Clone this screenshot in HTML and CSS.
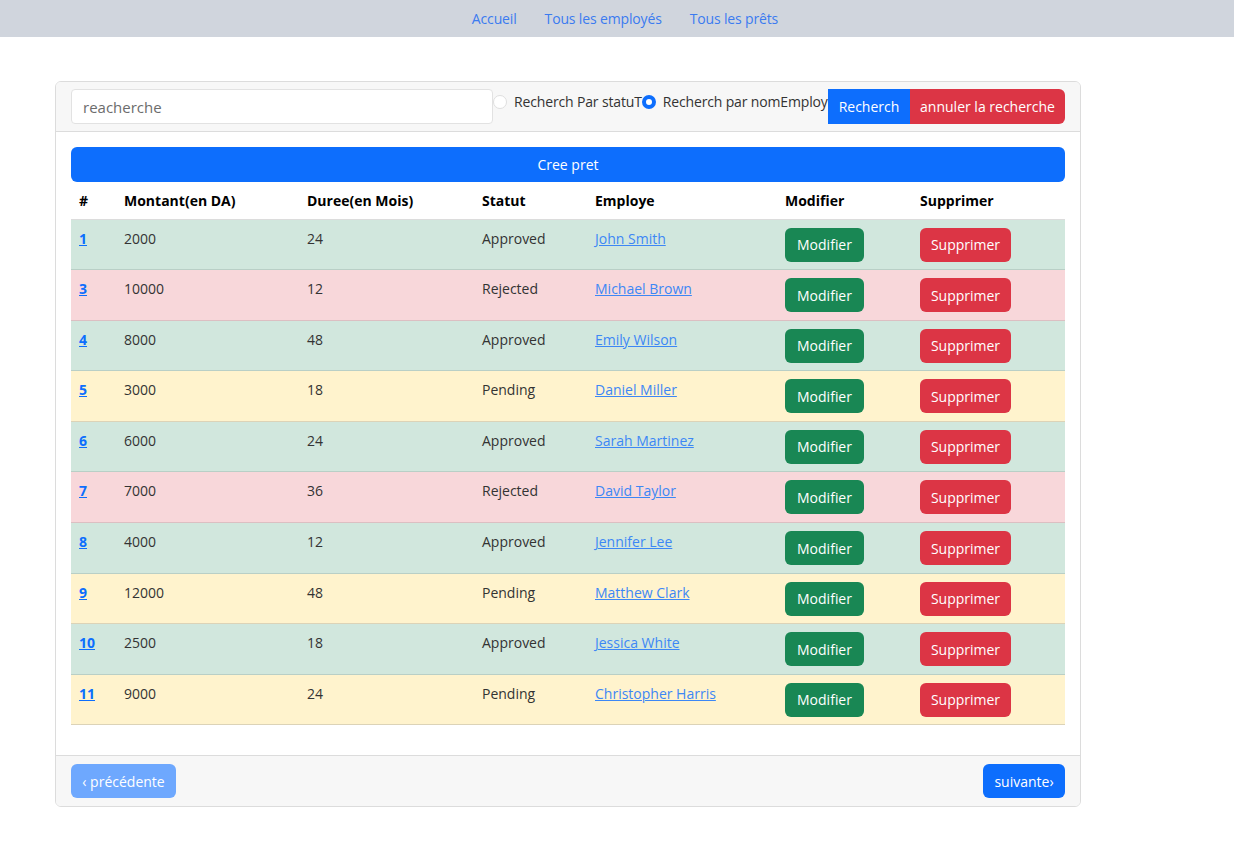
FILE: index.html
```html
<!DOCTYPE html>
<html lang="fr">
<head>
<meta charset="utf-8">
<title>Prêts</title>
<link rel="stylesheet" href="styles.css">
</head>
<body>
<nav class="topnav">
  <a href="#">Accueil</a>
  <a href="#">Tous les employés</a>
  <a href="#">Tous les prêts</a>
</nav>
<main class="page">
  <div class="card">
    <div class="card-header">
      <input class="search" type="text" placeholder="reacherche">
      <div class="radios">
        <label class="radio"><span class="dot"></span>Recherch Par statuT</label>
        <label class="radio"><span class="dot checked"></span>Recherch par nomEmploye</label>
      </div>
      <div class="btn-group">
        <button class="btn btn-blue sq-left">Recherch</button>
        <button class="btn btn-red sq-right">annuler la recherche</button>
      </div>
    </div>
    <div class="card-body">
      <button class="btn btn-blue btn-wide">Cree pret</button>
      <table class="loans">
        <colgroup>
          <col class="c1"><col class="c2"><col class="c3"><col class="c4"><col class="c5"><col class="c6"><col class="c7">
        </colgroup>
        <thead>
          <tr><th>#</th><th>Montant(en DA)</th><th>Duree(en Mois)</th><th>Statut</th><th>Employe</th><th>Modifier</th><th>Supprimer</th></tr>
        </thead>
        <tbody>
          <tr class="ok"><td><a class="id" href="#">1</a></td><td>2000</td><td>24</td><td>Approved</td><td><a class="emp" href="#">John Smith</a></td><td><button class="btn btn-green">Modifier</button></td><td><button class="btn btn-red">Supprimer</button></td></tr>
          <tr class="ko"><td><a class="id" href="#">3</a></td><td>10000</td><td>12</td><td>Rejected</td><td><a class="emp" href="#">Michael Brown</a></td><td><button class="btn btn-green">Modifier</button></td><td><button class="btn btn-red">Supprimer</button></td></tr>
          <tr class="ok"><td><a class="id" href="#">4</a></td><td>8000</td><td>48</td><td>Approved</td><td><a class="emp" href="#">Emily Wilson</a></td><td><button class="btn btn-green">Modifier</button></td><td><button class="btn btn-red">Supprimer</button></td></tr>
          <tr class="wait"><td><a class="id" href="#">5</a></td><td>3000</td><td>18</td><td>Pending</td><td><a class="emp" href="#">Daniel Miller</a></td><td><button class="btn btn-green">Modifier</button></td><td><button class="btn btn-red">Supprimer</button></td></tr>
          <tr class="ok"><td><a class="id" href="#">6</a></td><td>6000</td><td>24</td><td>Approved</td><td><a class="emp" href="#">Sarah Martinez</a></td><td><button class="btn btn-green">Modifier</button></td><td><button class="btn btn-red">Supprimer</button></td></tr>
          <tr class="ko"><td><a class="id" href="#">7</a></td><td>7000</td><td>36</td><td>Rejected</td><td><a class="emp" href="#">David Taylor</a></td><td><button class="btn btn-green">Modifier</button></td><td><button class="btn btn-red">Supprimer</button></td></tr>
          <tr class="ok"><td><a class="id" href="#">8</a></td><td>4000</td><td>12</td><td>Approved</td><td><a class="emp" href="#">Jennifer Lee</a></td><td><button class="btn btn-green">Modifier</button></td><td><button class="btn btn-red">Supprimer</button></td></tr>
          <tr class="wait"><td><a class="id" href="#">9</a></td><td>12000</td><td>48</td><td>Pending</td><td><a class="emp" href="#">Matthew Clark</a></td><td><button class="btn btn-green">Modifier</button></td><td><button class="btn btn-red">Supprimer</button></td></tr>
          <tr class="ok"><td><a class="id" href="#">10</a></td><td>2500</td><td>18</td><td>Approved</td><td><a class="emp" href="#">Jessica White</a></td><td><button class="btn btn-green">Modifier</button></td><td><button class="btn btn-red">Supprimer</button></td></tr>
          <tr class="wait"><td><a class="id" href="#">11</a></td><td>9000</td><td>24</td><td>Pending</td><td><a class="emp" href="#">Christopher Harris</a></td><td><button class="btn btn-green">Modifier</button></td><td><button class="btn btn-red">Supprimer</button></td></tr>
        </tbody>
      </table>
    </div>
    <div class="card-footer">
      <button class="btn btn-blue disabled">‹ précédente</button>
      <button class="btn btn-blue">suivante›</button>
    </div>
  </div>
</main>
</body>
</html>
```

FILE: styles.css
```css
* { box-sizing: border-box; }
body {
  margin: 0;
  font-family: "Open Sans", "Noto Sans", sans-serif;
  font-size: 15px;
  color: #212529;
  background: #fff;
}
.topnav {
  height: 37px;
  background: #d0d5dd;
  display: flex;
  justify-content: center;
  align-items: center;
  gap: 28px;
  padding-left: 16px;
}
.topnav a {
  color: #3b7bf0;
  text-decoration: none;
  font-size: 14px;
  letter-spacing: -0.15px;
}
.page {
  padding: 44px 0 0 55px;
}
.card {
  width: 1026px;
  border: 1px solid #dcdcdc;
  border-radius: 6px;
  overflow: hidden;
}
.card-header {
  background: #f7f7f7;
  border-bottom: 1px solid #dcdcdc;
  padding: 7px 15px 7px 15px;
  display: flex;
  align-items: center;
  height: 50px;
}
.search {
  width: 422px;
  height: 35px;
  border: 1px solid #e2e2e2;
  border-radius: 4px;
  padding: 0 11px;
  font-family: inherit;
  font-size: 15px;
  color: #212529;
  background: #fff;
  flex: none;
}
.search::placeholder { color: #6c6c6c; }
.radios {
  display: flex;
  align-items: center;
  width: 335px;
  overflow: hidden;
  white-space: nowrap;
  align-self: flex-start;
  padding-top: 3px;
  flex: none;
}
.radio {
  display: flex;
  align-items: center;
  font-size: 14px;
  letter-spacing: -0.15px;
  color: #333;
}
.dot {
  width: 14px;
  height: 14px;
  border-radius: 50%;
  border: 1px solid #dedede;
  background: #fff;
  margin-right: 7px;
  flex: none;
}
.dot.checked {
  border: 4px solid #0d6efd;
  margin-left: 0;
}
.btn-group { display: flex; flex: none; }
.btn {
  font-family: inherit;
  font-size: 14px;
  border: none;
  border-radius: 6px;
  padding: 0 12px;
  height: 35px;
  color: #fff;
  cursor: pointer;
}
.btn-blue { background: #0d6efd; }
.btn-red { background: #dc3545; }
.btn-green { background: #198754; }
.sq-left { border-radius: 0; width: 82px; padding: 0; }
.sq-right { border-radius: 0 6px 6px 0; width: 155px; padding: 0; }
.card-body {
  padding: 15px 15px 30px 15px;
}
.btn-wide {
  width: 100%;
  display: block;
}
.loans {
  width: 994px;
  border-collapse: collapse;
  table-layout: fixed;
}
.c1 { width: 45px; }
.c2 { width: 183px; }
.c3 { width: 175px; }
.c4 { width: 113px; }
.c5 { width: 190px; }
.c6 { width: 135px; }
.c7 { width: 153px; }
.loans th {
  text-align: left;
  font-weight: 700;
  font-size: 14px;
  color: #000;
  padding: 7px 8px 7px;
  height: 37px;
}
.loans td {
  padding: 7px 8px 6px;
  vertical-align: top;
  height: 50.6px;
  border-bottom: 1px solid #c4c8c6;
  color: #333;
  font-size: 14px;
  line-height: 24px;
}
.loans tbody tr:first-child td { border-top: 1px solid #dcdcdc; }
.ok td { background: #d1e7dd; border-bottom-color: #b9cfc6; }
.ko td { background: #f8d7da; border-bottom-color: #dcbfc2; }
.wait td { background: #fff3cd; border-bottom-color: #dcd3b7; }
.loans td .btn { height: 34px; margin-top: 1px; font-size: 14px; }
.loans td .btn-green { width: 79px; padding: 0; }
.loans td .btn-red { width: 91px; padding: 0; }
.id {
  color: #0d6efd;
  font-weight: 700;
  text-decoration: underline;
}
.emp {
  color: #3d87f5;
  text-decoration: underline;
}
.card-footer {
  background: #f7f7f7;
  border-top: 1px solid #dcdcdc;
  padding: 8px 15px 7px;
  display: flex;
  justify-content: space-between;
  height: 51px;
}
.card-footer .btn { height: 34px; }
.card-footer .disabled { background: #6ea8fe; width: 105px; padding: 0; }
.card-footer .btn:last-child { width: 82px; padding: 0; }
```
